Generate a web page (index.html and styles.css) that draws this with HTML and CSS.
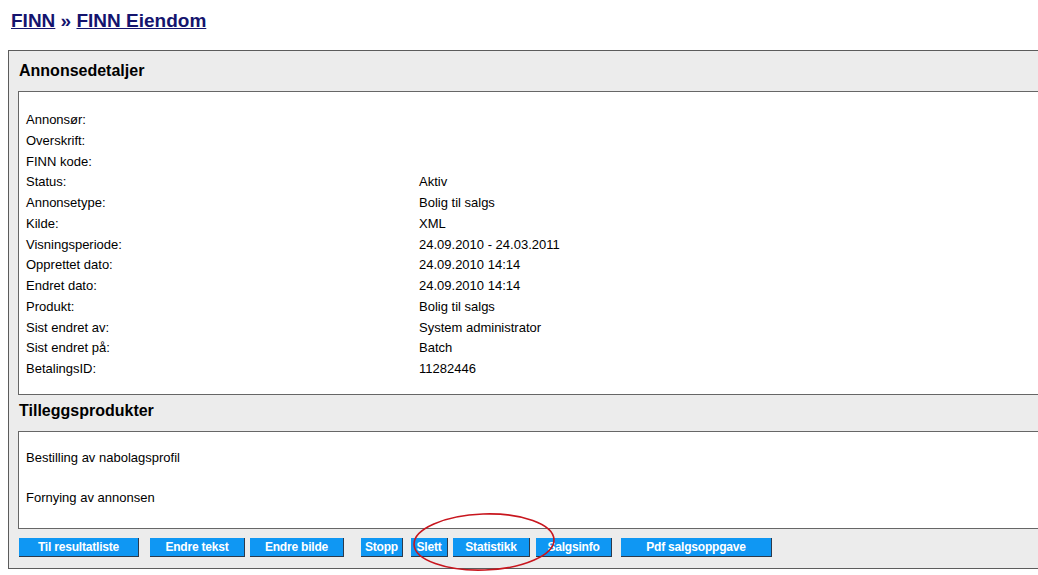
FILE: index.html
```html
<!DOCTYPE html>
<html lang="no">
<head>
    <meta charset="UTF-8">
    <title>FINN Eiendom - Annonsedetaljer</title>
    <link rel="stylesheet" href="styles.css">
</head>
<body>
    <h1 class="crumbs"><a href="#">FINN</a> &raquo; <a href="#">FINN Eiendom</a></h1>

    <div class="panel">
        <h2>Annonsedetaljer</h2>
        <div class="box details">
            <div class="row"><span class="label">Annonsør:</span><span></span></div>
            <div class="row"><span class="label">Overskrift:</span><span></span></div>
            <div class="row"><span class="label">FINN kode:</span><span></span></div>
            <div class="row"><span class="label">Status:</span><span>Aktiv</span></div>
            <div class="row"><span class="label">Annonsetype:</span><span>Bolig til salgs</span></div>
            <div class="row"><span class="label">Kilde:</span><span>XML</span></div>
            <div class="row"><span class="label">Visningsperiode:</span><span>24.09.2010 - 24.03.2011</span></div>
            <div class="row"><span class="label">Opprettet dato:</span><span>24.09.2010 14:14</span></div>
            <div class="row"><span class="label">Endret dato:</span><span>24.09.2010 14:14</span></div>
            <div class="row"><span class="label">Produkt:</span><span>Bolig til salgs</span></div>
            <div class="row"><span class="label">Sist endret av:</span><span>System administrator</span></div>
            <div class="row"><span class="label">Sist endret på:</span><span>Batch</span></div>
            <div class="row"><span class="label">BetalingsID:</span><span>11282446</span></div>
        </div>

        <h2 class="sub">Tilleggsprodukter</h2>
        <div class="box extras">
            <div class="extra">Bestilling av nabolagsprofil</div>
            <div class="extra">Fornying av annonsen</div>
        </div>

        <div class="buttons">
            <button class="b-list">Til resultatliste</button>
            <button class="b-text">Endre tekst</button>
            <button class="b-image">Endre bilde</button>
            <button class="b-stop">Stopp</button>
            <button class="b-delete">Slett</button>
            <button class="b-stats">Statistikk</button>
            <button class="b-sales">Salgsinfo</button>
            <button class="b-pdf">Pdf salgsoppgave</button>
        </div>
    </div>

    <!-- red marker drawn on the screenshot -->
    <svg class="marker" width="146" height="62" viewBox="0 0 146 62">
        <ellipse cx="73" cy="30" rx="70" ry="28" fill="none" stroke="#c8161e" stroke-width="1.6" transform="rotate(-2 73 30)"/>
    </svg>
</body>
</html>
```

FILE: styles.css
```css
html {
    overflow: hidden;
    background: #fff;
}
body {
    /* page continues past the right edge of the window */
    margin: 8px -60px 8px 8px;
    font-family: Arial, "Liberation Sans", sans-serif;
    font-size: 13px;
    color: #000;
}
.crumbs {
    margin: 1px 0 18px;
    padding-left: 3px;
    font-size: 19px;
    line-height: 23px;
    font-weight: bold;
    color: #14146e;
}
.crumbs a {
    color: #14146e;
    text-decoration: underline;
}
.panel {
    max-width: none;
    background: #ececec;
    border: 1px solid #5c5c5c;
    padding: 0 0 11px 9px;
}
.panel h2 {
    margin: 0;
    padding-left: 1px;
    height: 40px;
    line-height: 40px;
    font-size: 16px;
    font-weight: bold;
}
.panel h2.sub {
    height: 36px;
    line-height: 32px;
}
.box {
    max-width: none;
    background: #fff;
    border: 1px solid #666;
}
.details {
    padding: 18px 0 14px 7px;
}
.row {
    display: flex;
    height: 20.75px;
    line-height: 20.75px;
}
.label {
    width: 393px;
}
.extras {
    padding: 16px 0 20px 7px;
}
.extra {
    line-height: 20px;
}
.extra + .extra {
    margin-top: 20px;
}
.buttons {
    display: flex;
    margin-top: 9px;
    padding-left: 1px;
}
.buttons button {
    height: 19px;
    padding: 0;
    border: none;
    border-right: 1px solid #2c3a4c;
    border-bottom: 1px solid #2c3a4c;
    background: #0f97f3;
    color: #fff;
    font-family: Arial, "Liberation Sans", sans-serif;
    font-size: 12px;
    font-weight: bold;
    letter-spacing: -0.2px;
    line-height: 18px;
    text-align: center;
    cursor: pointer;
}
.b-list { width: 120px; }
.b-text { width: 95px; margin-left: 11px; }
.b-image { width: 94px; margin-left: 5px; }
.b-stop { width: 42px; margin-left: 17px; }
.b-delete { width: 37px; margin-left: 8px; }
.b-stats { width: 77px; margin-left: 5px; }
.b-sales { width: 76px; margin-left: 6px; }
.b-pdf { width: 151px; margin-left: 9px; }
.marker {
    position: absolute;
    left: 411px;
    top: 512px;
}
```
